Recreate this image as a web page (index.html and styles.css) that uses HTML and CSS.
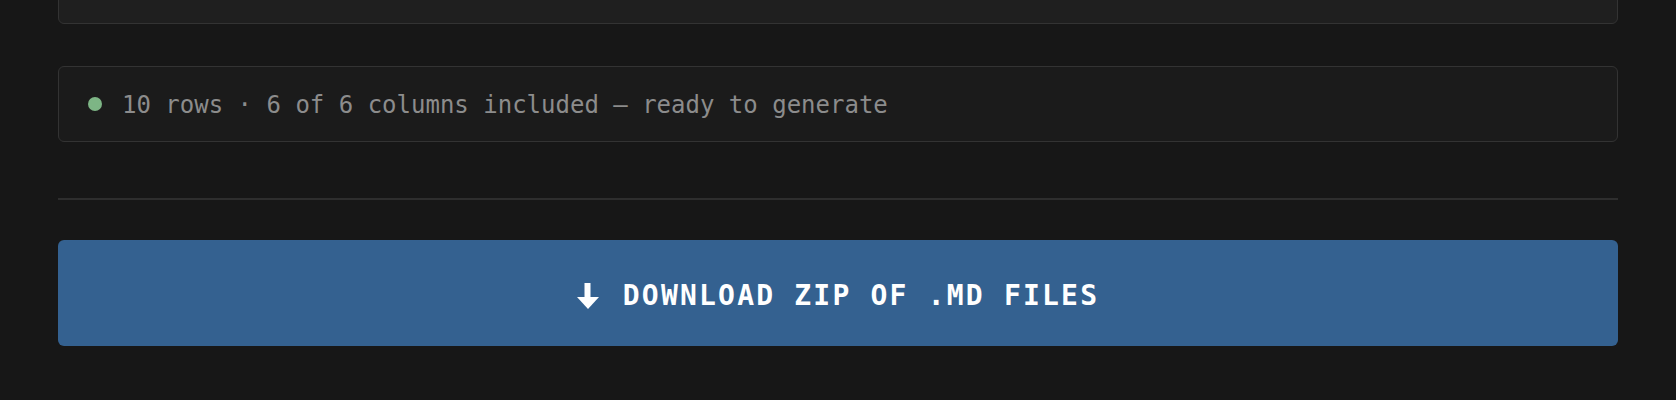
FILE: index.html
```html
<!DOCTYPE html>
<html lang="en">
<head>
<meta charset="utf-8">
<title>Export</title>
<link rel="stylesheet" href="styles.css">
</head>
<body>
<main class="page">
  <div class="card-prev"></div>
  <div class="status">
    <span class="dot"></span>
    <span class="status-text">10 rows · 6 of 6 columns included — ready to generate</span>
  </div>
  <hr class="divider">
  <button class="download" type="button">
    <svg class="arrow" width="22" height="26" viewBox="0 0 22 26" aria-hidden="true">
      <rect x="7.5" y="0" width="6" height="14.5" fill="#ffffff"/>
      <polygon points="0,14 22,14 11,26" fill="#ffffff"/>
    </svg>
    <span class="label">DOWNLOAD ZIP OF .MD FILES</span>
  </button>
</main>
</body>
</html>
```
FILE: styles.css
```css
* { box-sizing: border-box; }
html, body { margin: 0; padding: 0; }
body {
  background: #171717;
  font-family: "DejaVu Sans Mono", "Liberation Mono", monospace;
  height: 400px;
  overflow: hidden;
}
.page {
  padding: 0 58px;
  display: flex;
  flex-direction: column;
}
.card-prev {
  margin-top: -40px;
  height: 64px;
  background: #1f1f1f;
  border: 1px solid #333333;
  border-radius: 6px;
}
.status {
  margin-top: 42px;
  height: 76px;
  background: #1b1b1b;
  border: 1px solid #333333;
  border-radius: 6px;
  display: flex;
  align-items: center;
  padding-left: 29px;
  gap: 20px;
}
.dot {
  width: 14px;
  height: 14px;
  border-radius: 50%;
  background: #7db585;
  flex: none;
}
.status-text {
  color: #8c8c8c;
  font-size: 24px;
  line-height: 1;
  padding-top: 2px;
}
.divider {
  margin: 56px 0 0;
  border: 0;
  height: 2px;
  background: #2e2e2e;
}
.download {
  margin-top: 40px;
  height: 106px;
  width: 100%;
  background: #346190;
  border: 0;
  border-radius: 6px;
  color: #ffffff;
  display: flex;
  align-items: center;
  justify-content: center;
  gap: 24px;
  font-family: "DejaVu Sans Mono", "Liberation Mono", monospace;
  font-weight: 700;
  font-size: 28px;
  letter-spacing: 2.2px;
  padding: 0;
}
.arrow { flex: none; margin-top: 6px; }
.label { line-height: 1; margin-top: 6px; }
```
